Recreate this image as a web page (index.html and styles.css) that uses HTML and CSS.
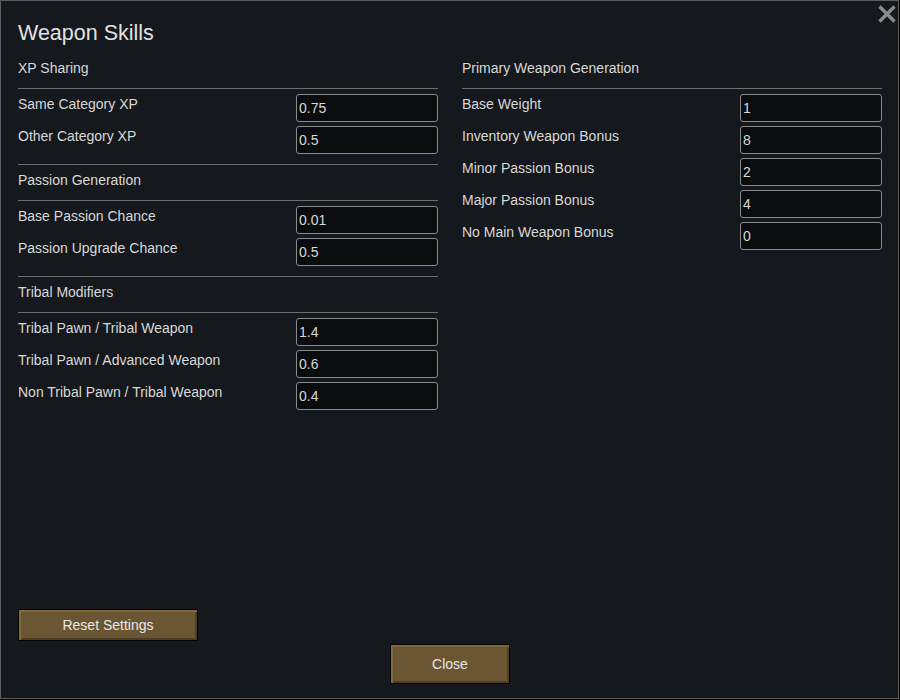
FILE: index.html
```html
<!DOCTYPE html>
<html lang="en">
<head>
<meta charset="utf-8">
<title>Weapon Skills</title>
<link rel="stylesheet" href="styles.css">
</head>
<body>
<div class="window">
  <button class="close-x" aria-label="Close">
    <svg width="20" height="20" viewBox="0 0 20 20"><path d="M2.5 2.5 L17.5 17.5 M17.5 2.5 L2.5 17.5" stroke="#8b8b8b" stroke-width="3.4" stroke-linecap="butt" fill="none"/></svg>
  </button>
  <h1 class="title">Weapon Skills</h1>
  <div class="columns">
    <div class="column">
      <section class="section">
        <div class="heading">XP Sharing</div>
        <div class="rows">
          <div class="row"><span class="label">Same Category XP</span><div class="field">0.75</div></div>
          <div class="row"><span class="label">Other Category XP</span><div class="field">0.5</div></div>
        </div>
      </section>
      <section class="section">
        <div class="heading">Passion Generation</div>
        <div class="rows">
          <div class="row"><span class="label">Base Passion Chance</span><div class="field">0.01</div></div>
          <div class="row"><span class="label">Passion Upgrade Chance</span><div class="field">0.5</div></div>
        </div>
      </section>
      <section class="section">
        <div class="heading">Tribal Modifiers</div>
        <div class="rows">
          <div class="row"><span class="label">Tribal Pawn / Tribal Weapon</span><div class="field">1.4</div></div>
          <div class="row"><span class="label">Tribal Pawn / Advanced Weapon</span><div class="field">0.6</div></div>
          <div class="row"><span class="label">Non Tribal Pawn / Tribal Weapon</span><div class="field">0.4</div></div>
        </div>
      </section>
    </div>
    <div class="column">
      <section class="section">
        <div class="heading">Primary Weapon Generation</div>
        <div class="rows">
          <div class="row"><span class="label">Base Weight</span><div class="field">1</div></div>
          <div class="row"><span class="label">Inventory Weapon Bonus</span><div class="field">8</div></div>
          <div class="row"><span class="label">Minor Passion Bonus</span><div class="field">2</div></div>
          <div class="row"><span class="label">Major Passion Bonus</span><div class="field">4</div></div>
          <div class="row"><span class="label">No Main Weapon Bonus</span><div class="field">0</div></div>
        </div>
      </section>
    </div>
  </div>
  <div class="spacer"></div>
  <div class="footer">
    <button class="btn btn-reset">Reset Settings</button>
    <button class="btn btn-close">Close</button>
  </div>
</div>
</body>
</html>
```

FILE: styles.css
```css
html, body {
  margin: 0;
  padding: 0;
  background: #000;
}

body {
  width: 900px;
  height: 700px;
  font-family: "Liberation Sans", Arial, sans-serif;
  color: #d8d8d8;
}

.window {
  position: relative;
  box-sizing: border-box;
  width: 899px;
  height: 699px;
  border: 1px solid #5c5c5c;
  background: #15181d;
  padding: 0 16px 14px 17px;
  display: flex;
  flex-direction: column;
}

.close-x {
  position: absolute;
  top: 3px;
  right: 1px;
  width: 20px;
  height: 20px;
  padding: 0;
  border: 0;
  background: none;
  cursor: pointer;
}

.close-x svg {
  display: block;
}

.title {
  margin: 19px 0 7px 0;
  font-size: 21.5px;
  line-height: 26px;
  font-weight: normal;
  color: #e2e2e2;
}

.columns {
  display: grid;
  grid-template-columns: 420px 420px;
  column-gap: 24px;
}

.section + .section {
  border-top: 1px solid #6e6e6e;
}

.heading {
  margin-top: 5px;
  height: 20px;
  font-size: 14px;
  line-height: 20px;
  padding-bottom: 10px;
  border-bottom: 1px solid #6e6e6e;
  color: #d8d8d8;
}

.rows {
  padding: 5px 0 6px 0;
}

.row {
  display: flex;
  justify-content: space-between;
  align-items: flex-start;
  height: 28px;
  margin-bottom: 4px;
}

.label {
  font-size: 14px;
  line-height: 20px;
  color: #d8d8d8;
}

.field {
  box-sizing: border-box;
  width: 142px;
  height: 28px;
  border: 1px solid #8a8a8a;
  border-radius: 3px;
  background: #0b0c0d;
  padding: 0 2px;
  font-size: 14px;
  line-height: 26px;
  color: #d8d8d8;
}

.spacer {
  flex: 1;
}

.footer {
  display: flex;
  flex-direction: column;
  gap: 3px;
}

.btn {
  box-sizing: border-box;
  border: 1px solid #050505;
  background: #6b5634;
  box-shadow: inset 2px 2px 0 #80683f, inset -2px -2px 0 #4f3e24;
  font-family: "Liberation Sans", Arial, sans-serif;
  font-size: 14px;
  color: #e6e6e6;
  padding: 0;
  cursor: pointer;
}

.btn-reset {
  align-self: flex-start;
  width: 180px;
  height: 32px;
}

.btn-close {
  align-self: center;
  width: 120px;
  height: 40px;
}
```
